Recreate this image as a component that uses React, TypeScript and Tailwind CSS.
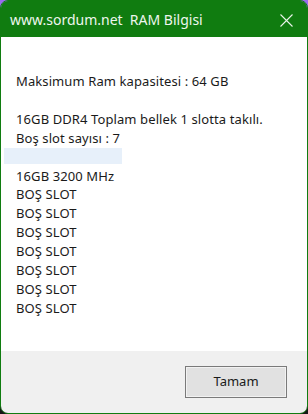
export default function App() {
  const slots = Array.from({ length: 7 }, () => "BOŞ SLOT");

  return (
    <div className="w-[308px] h-[414px] bg-[linear-gradient(to_bottom,#9a6cef_50%,#161616_50%)]">
      <div className="w-full h-full rounded-[8px] border border-[#107c10] overflow-hidden flex flex-col font-['Noto_Sans','Open_Sans',sans-serif]">
        {/* title bar */}
        <div className="h-[36px] bg-[#107c10] flex items-center justify-between pl-[9px] pr-[14px] shrink-0">
          <span className="text-[14px] text-[#eef6ee] whitespace-pre">www.sordum.net  RAM Bilgisi</span>
          <svg width="13" height="13" viewBox="0 0 13 13" className="mt-[2px]">
            <path d="M0.5 0.5 L12.5 12.5 M12.5 0.5 L0.5 12.5" stroke="#e8f3e8" strokeWidth="1.1" />
          </svg>
        </div>

        {/* body */}
        <div className="flex-1 bg-white pl-[15px] pt-[35px] text-[13px] leading-[18.9px] text-[#1a1a1a] tracking-[0.1px]">
          <div>Maksimum Ram kapasitesi : 64 GB</div>
          <div className="h-[18.9px]" />
          <div>16GB DDR4 Toplam bellek 1 slotta takılı.</div>
          <div>Boş slot sayısı : 7</div>
          <div className="h-[18.9px] pt-[0.5px]">
            <div className="-ml-[12px] w-[118px] h-[16px] bg-[#e7f0fa]" />
          </div>
          <div>16GB 3200 MHz</div>
          {slots.map((s, i) => (
            <div key={i}>{s}</div>
          ))}
        </div>

        {/* footer */}
        <div className="h-[62px] bg-[#f0f0f0] shrink-0 flex justify-end pt-[15px] pr-[20px]">
          <button className="w-[102px] h-[32px] bg-[#e1e1e1] border border-[#7a7a7a] shadow-[inset_0_0_0_1px_#f2f2f2] text-[13px] text-[#1a1a1a]">
            Tamam
          </button>
        </div>
      </div>
    </div>
  );
}
